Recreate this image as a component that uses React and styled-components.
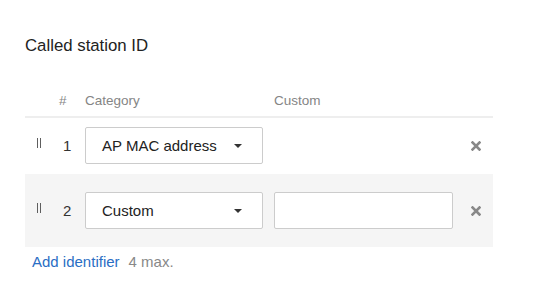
import React from "react";
import styled, { createGlobalStyle } from "styled-components";

const GlobalStyle = createGlobalStyle`
  body {
    margin: 0;
    background: #ffffff;
    font-family: "Liberation Sans", Arial, sans-serif;
  }
`;

const StyledPanel = styled.div`
  width: 468px;
  padding: 36px 0 0 25px;
`;

const StyledTitle = styled.div`
  font-size: 16.8px;
  line-height: 20px;
  color: #222222;
  margin-bottom: 36px;
`;

const StyledGridRow = styled.div`
  display: grid;
  grid-template-columns: 34px 26px 189px 179px 1fr;
  align-items: center;
`;

const StyledHeader = styled(StyledGridRow)`
  font-size: 13.5px;
  line-height: 18px;
  color: #858585;
  padding-bottom: 6px;
  border-bottom: 2px solid #eeeeee;
`;

const StyledRow = styled(StyledGridRow)`
  background: ${(props) => (props.$active ? "#f5f5f5" : "#ffffff")};
  padding: ${(props) => (props.$active ? "18px 0 18px" : "9px 0 10px")};
`;

const StyledHandle = styled.span`
  justify-self: start;
  margin: -6px 0 0 12px;
  width: 2px;
  height: 10px;
  border-left: 1px solid #5e5e5e;
  border-right: 1px solid #5e5e5e;
`;

const StyledNumber = styled.span`
  padding-left: 4px;
  font-size: 15px;
  color: #333333;
`;

const StyledSelect = styled.div`
  box-sizing: border-box;
  width: 178px;
  height: 37px;
  display: flex;
  align-items: center;
  justify-content: space-between;
  padding: 0 20px 0 16px;
  background: #ffffff;
  border: 1px solid #cccccc;
  border-radius: 2px;
  font-size: 15px;
  color: #222222;
`;

const StyledCaret = styled.span`
  width: 0;
  height: 0;
  border-left: 4px solid transparent;
  border-right: 4px solid transparent;
  border-top: 4px solid #333333;
`;

const StyledInput = styled.input`
  box-sizing: border-box;
  width: 179px;
  height: 37px;
  margin: 0;
  padding: 0 10px;
  background: #ffffff;
  border: 1px solid #cccccc;
  border-radius: 2px;
  font-family: inherit;
  font-size: 15px;
  outline: none;
`;

const StyledRemove = styled.svg`
  justify-self: start;
  margin-left: 18px;
  width: 10px;
  height: 10px;
  color: #888888;
`;

const StyledFooter = styled.div`
  display: flex;
  align-items: baseline;
  gap: 9px;
  margin-top: 6px;
  padding-left: 7px;
  font-size: 15px;
  line-height: 18px;
`;

const StyledLink = styled.a`
  color: #2a6ec4;
  text-decoration: none;
  cursor: pointer;
`;

const StyledHint = styled.span`
  color: #888888;
`;

const rows = [
  { id: 1, category: "AP MAC address", custom: false },
  { id: 2, category: "Custom", custom: true },
];

function RemoveIcon() {
  return (
    <StyledRemove viewBox="0 0 10 10">
      <path
        d="M1.5 1.5 L8.5 8.5 M8.5 1.5 L1.5 8.5"
        stroke="currentColor"
        strokeWidth="2.6"
        strokeLinecap="square"
        fill="none"
      />
    </StyledRemove>
  );
}

export default function App() {
  return (
    <>
      <GlobalStyle />
      <StyledPanel>
        <StyledTitle>Called station ID</StyledTitle>
        <StyledHeader>
          <span />
          <span>#</span>
          <span>Category</span>
          <span>Custom</span>
          <span />
        </StyledHeader>
        {rows.map((row) => (
          <StyledRow key={row.id} $active={row.custom}>
            <StyledHandle />
            <StyledNumber>{row.id}</StyledNumber>
            <StyledSelect>
              {row.category}
              <StyledCaret />
            </StyledSelect>
            {row.custom ? <StyledInput type="text" /> : <span />}
            <RemoveIcon />
          </StyledRow>
        ))}
        <StyledFooter>
          <StyledLink>Add identifier</StyledLink>
          <StyledHint>4 max.</StyledHint>
        </StyledFooter>
      </StyledPanel>
    </>
  );
}
